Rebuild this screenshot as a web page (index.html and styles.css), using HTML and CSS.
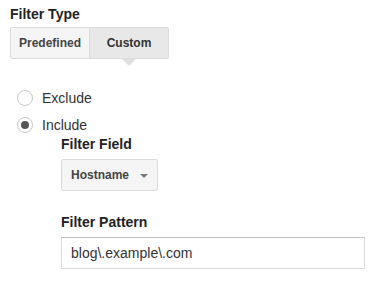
FILE: index.html
```html
<!DOCTYPE html>
<html lang="en">
<head>
    <meta charset="UTF-8">
    <meta name="viewport" content="width=device-width, initial-scale=1.0">
    <title>Filter Type</title>
    <link rel="stylesheet" href="styles.css">
</head>
<body>

<div class="filtro">
    <h3 class="titulo">Filter Type</h3>

    <div class="grupo-botoes">
        <button type="button" class="botao">Predefined</button>
        <button type="button" class="botao ativo">Custom</button>
    </div>

    <div class="opcoes">
        <label class="opcao">
            <span class="radio"></span>
            <span>Exclude</span>
        </label>
        <label class="opcao">
            <span class="radio marcado"></span>
            <span>Include</span>
        </label>
    </div>

    <div class="campos">
        <h4 class="rotulo">Filter Field</h4>
        <div class="seletor">
            <span>Hostname</span>
            <span class="seta"></span>
        </div>

        <h4 class="rotulo rotulo-padrao">Filter Pattern</h4>
        <input type="text" class="entrada" value="blog\.example\.com">
    </div>
</div>

</body>
</html>
```

FILE: styles.css
```css
body {
    font-family: Arial, "Liberation Sans", sans-serif;
    background-color: #fff;
    color: #333;
    margin: 0;
    padding: 6px 10px;
}

.titulo {
    font-size: 14px;
    line-height: 16px;
    font-weight: bold;
    color: #222;
    margin: 0 0 5px;
}

.grupo-botoes {
    display: flex;
    width: max-content;
}

.botao {
    font-family: inherit;
    font-size: 12px;
    font-weight: bold;
    color: #444;
    background: #f5f5f5;
    border: 1px solid #dcdcdc;
    border-radius: 2px 0 0 2px;
    height: 32px;
    padding: 0 8px;
    cursor: pointer;
}

.botao.ativo {
    position: relative;
    background: #e8e8e8;
    border-left: none;
    border-radius: 0 2px 2px 0;
    width: 79px;
    color: #333;
}

.botao.ativo::after {
    content: "";
    position: absolute;
    left: 50%;
    bottom: -8px;
    margin-left: -7px;
    border-left: 7px solid transparent;
    border-right: 7px solid transparent;
    border-top: 7px solid #e0e0e0;
}

.opcoes {
    margin-top: 31px;
    padding-left: 7px;
}

.opcao {
    display: flex;
    align-items: center;
    gap: 9px;
    font-size: 14px;
    line-height: 16px;
    color: #333;
    margin-bottom: 11px;
}

.radio {
    width: 14px;
    height: 14px;
    border: 1px solid #c8c8c8;
    border-radius: 50%;
    display: flex;
    align-items: center;
    justify-content: center;
}

.radio.marcado::after {
    content: "";
    width: 8px;
    height: 8px;
    border-radius: 50%;
    background: #555;
}

.campos {
    padding-left: 51px;
    margin-top: -8px;
}

.rotulo {
    font-size: 14px;
    line-height: 16px;
    font-weight: bold;
    color: #222;
    margin: 0 0 7px;
}

.rotulo-padrao {
    margin-top: 23px;
}

.seletor {
    display: flex;
    align-items: center;
    justify-content: space-between;
    width: 97px;
    height: 32px;
    box-sizing: border-box;
    padding: 0 9px 0 9px;
    background: #f5f5f5;
    border: 1px solid #dcdcdc;
    border-radius: 2px;
    font-size: 12px;
    font-weight: bold;
    color: #444;
}

.seta {
    border-left: 4px solid transparent;
    border-right: 4px solid transparent;
    border-top: 4px solid #777;
    margin-top: 2px;
}

.entrada {
    display: block;
    width: 304px;
    height: 32px;
    box-sizing: border-box;
    border: 1px solid #d9d9d9;
    border-top-color: #c0c0c0;
    padding: 0 9px;
    font-family: inherit;
    font-size: 14px;
    color: #333;
}
```
